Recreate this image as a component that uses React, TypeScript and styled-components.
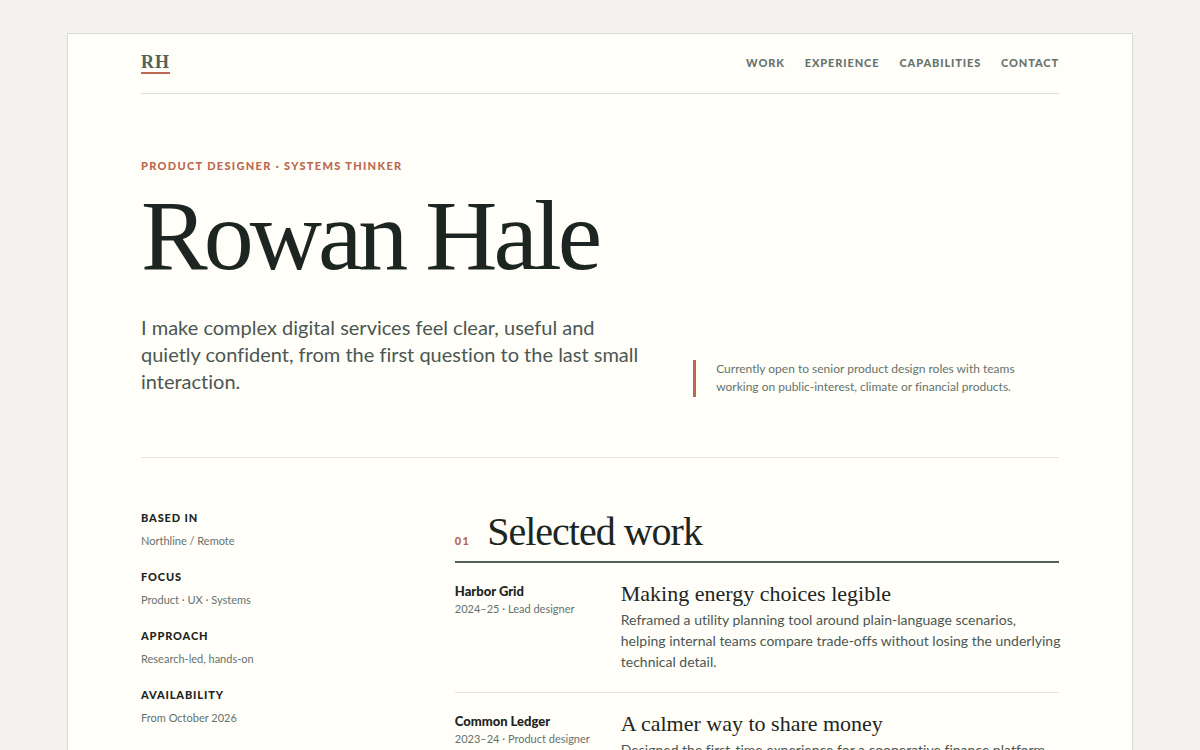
import React from "react";
import styled, { createGlobalStyle } from "styled-components";

const serif = `"Liberation Serif", serif`;
const sans = `Lato, "Open Sans", sans-serif`;

const color = {
  page: "#f4f2ee",
  paper: "#fffef9",
  ink: "#1d2522",
  body: "#4b5752",
  muted: "#66736c",
  green: "#536259",
  accent: "#bc6750",
  line: "#d8ddd8",
  softLine: "#e4e5e1",
};

const GlobalStyle = createGlobalStyle`
  *, *::before, *::after { box-sizing: border-box; }
  body {
    margin: 0;
    background: ${color.page};
    color: ${color.ink};
    font-family: ${sans};
    font-variant-ligatures: none;
  }
  h1, h2, h3, p, dl, dt, dd { margin: 0; }
  a { color: inherit; text-decoration: none; }
`;

const Sheet = styled.div`
  margin: 33px 67px;
  padding: 0 73px 64px;
  background: ${color.paper};
  border: 1px solid ${color.line};
`;

const Header = styled.header`
  display: flex;
  align-items: center;
  justify-content: space-between;
  height: 60px;
  padding-bottom: 2px;
  border-bottom: 1px solid ${color.line};
`;

const Monogram = styled.a`
  border-bottom: 2px solid ${color.accent};
  color: ${color.green};
  font: 700 18px/20px ${serif};
  letter-spacing: 1px;
`;

const Nav = styled.nav`
  display: flex;
  gap: 20px;
`;

const NavLink = styled.a`
  color: ${color.muted};
  font-size: 11px;
  font-weight: 900;
  line-height: 16px;
  letter-spacing: 0.08em;
  text-transform: uppercase;
`;

const Hero = styled.section`
  display: grid;
  grid-template-columns: 7fr 5fr;
  column-gap: 40px;
  align-items: end;
  padding: 64px 0 60px;
  border-bottom: 1px solid ${color.softLine};
`;

const Intro = styled.div`
  padding-bottom: 2px;
`;

const Eyebrow = styled.p`
  color: ${color.accent};
  font-size: 11px;
  font-weight: 900;
  line-height: 16px;
  letter-spacing: 0.12em;
  text-transform: uppercase;
`;

const Name = styled.h1`
  margin: 14px 0 30px;
  font: 400 100px/96px ${serif};
  letter-spacing: -4px;
  white-space: nowrap;
`;

const Lead = styled.p`
  color: ${color.body};
  font-size: 20px;
  line-height: 27px;
`;

const Note = styled.p`
  padding: 0 0 1px 20px;
  border-left: 3px solid ${color.accent};
  color: ${color.muted};
  font-size: 12px;
  line-height: 18px;
`;

const NoteLine = styled.span`
  display: block;
`;

const Columns = styled.div`
  display: grid;
  grid-template-columns: 7fr 17fr;
  column-gap: 65px;
  padding-top: 52px;
`;

const Facts = styled.dl`
  display: grid;
  align-content: start;
  gap: 19px;
`;

const FactLabel = styled.dt`
  font-size: 11px;
  font-weight: 900;
  line-height: 16px;
  letter-spacing: 0.08em;
  text-transform: uppercase;
`;

const FactValue = styled.dd`
  margin-top: 6px;
  color: ${color.muted};
  font-size: 11px;
  line-height: 18px;
`;

const SectionHead = styled.div`
  display: flex;
  align-items: baseline;
  gap: 17px;
  padding-bottom: 7px;
  border-bottom: 2px solid ${color.green};
`;

const SectionNumber = styled.span`
  color: ${color.accent};
  font-size: 11px;
  font-weight: 900;
  letter-spacing: 0.12em;
`;

const SectionTitle = styled.h2`
  font: 400 40px/44px ${serif};
  letter-spacing: -1px;
`;

const Project = styled.article`
  display: grid;
  grid-template-columns: 150px minmax(0, 1fr);
  column-gap: 16px;
  padding: 17px 0 20px;
  border-bottom: 1px solid ${color.softLine};

  &:last-child { border-bottom: 0; }
`;

const Client = styled.p`
  padding-top: 1px;
  font-size: 13px;
  font-weight: 900;
  line-height: 20px;
`;

const Role = styled.p`
  color: ${color.muted};
  font-size: 11px;
  line-height: 16px;
`;

const ProjectTitle = styled.h3`
  margin-bottom: 1px;
  font: 400 22px/28px ${serif};
`;

const Summary = styled.p`
  color: ${color.body};
  font-size: 14px;
  line-height: 21px;
  white-space: pre;
`;

const links = ["Work", "Experience", "Capabilities", "Contact"];

const facts = [
  ["Based in", "Northline / Remote"],
  ["Focus", "Product · UX · Systems"],
  ["Approach", "Research-led, hands-on"],
  ["Availability", "From October 2026"],
];

const projects = [
  {
    client: "Harbor Grid",
    role: "2024–25 · Lead designer",
    title: "Making energy choices legible",
    summary: [
      "Reframed a utility planning tool around plain-language scenarios,",
      "helping internal teams compare trade-offs without losing the underlying",
      "technical detail.",
    ],
  },
  {
    client: "Common Ledger",
    role: "2023–24 · Product designer",
    title: "A calmer way to share money",
    summary: ["Designed the first-time experience for a cooperative finance platform,"],
  },
];

export default function App() {
  return (
    <>
      <GlobalStyle />
      <Sheet>
        <Header>
          <Monogram href="#top">RH</Monogram>
          <Nav aria-label="Main">
            {links.map((label) => (
              <NavLink key={label} href={`#${label.toLowerCase()}`}>
                {label}
              </NavLink>
            ))}
          </Nav>
        </Header>
        <main>
          <Hero id="top">
            <Intro>
              <Eyebrow>Product designer · Systems thinker</Eyebrow>
              <Name>Rowan Hale</Name>
              <Lead>
                I make complex digital services feel clear, useful and quietly confident, from the
                first question to the last small interaction.
              </Lead>
            </Intro>
            <Note>
              <NoteLine>Currently open to senior product design roles with teams</NoteLine>
              <NoteLine>working on public-interest, climate or financial products.</NoteLine>
            </Note>
          </Hero>
          <Columns>
            <Facts>
              {facts.map(([label, value]) => (
                <div key={label}>
                  <FactLabel>{label}</FactLabel>
                  <FactValue>{value}</FactValue>
                </div>
              ))}
            </Facts>
            <section id="work">
              <SectionHead>
                <SectionNumber>01</SectionNumber>
                <SectionTitle>Selected work</SectionTitle>
              </SectionHead>
              {projects.map((project) => (
                <Project key={project.client}>
                  <div>
                    <Client>{project.client}</Client>
                    <Role>{project.role}</Role>
                  </div>
                  <div>
                    <ProjectTitle>{project.title}</ProjectTitle>
                    <Summary>{project.summary.join("\n")}</Summary>
                  </div>
                </Project>
              ))}
            </section>
          </Columns>
        </main>
      </Sheet>
    </>
  );
}
